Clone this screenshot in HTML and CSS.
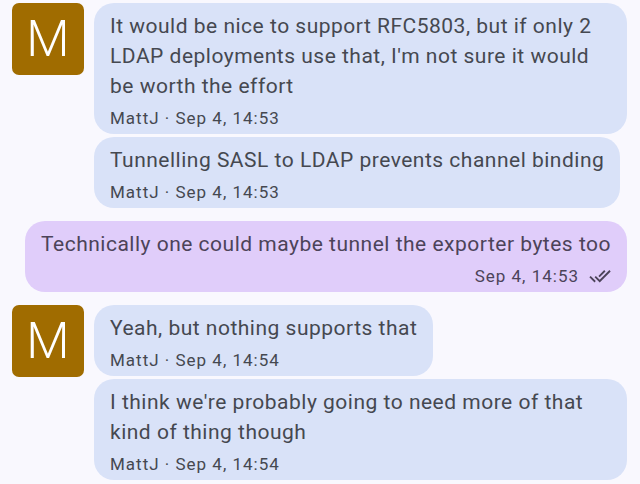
FILE: index.html
```html
<!DOCTYPE html>
<html>
<head>
<meta charset="utf-8">
<link rel="stylesheet" href="styles.css">
</head>
<body>
<div class="chat">
  <div class="group received">
    <div class="avatar">M</div>
    <div class="bubbles">
      <div class="bubble">
        <div class="text">It would be nice to support RFC5803, but if only 2 LDAP deployments use that, I'm not sure it would be worth the effort</div>
        <div class="meta">MattJ · Sep 4, 14:53</div>
      </div>
      <div class="bubble">
        <div class="text">Tunnelling SASL to LDAP prevents channel binding</div>
        <div class="meta">MattJ · Sep 4, 14:53</div>
      </div>
    </div>
  </div>
  <div class="group sent">
    <div class="bubbles">
      <div class="bubble out">
        <div class="text">Technically one could maybe tunnel the exporter bytes too</div>
        <div class="meta out-meta">Sep 4, 14:53
          <svg class="tick" viewBox="0 0 24 24" width="22" height="22"><path fill="currentColor" d="M18 7l-1.41-1.41-6.34 6.34 1.41 1.41L18 7zm4.24-1.41L11.66 16.17 7.48 12l-1.41 1.41L11.66 19l12-12-1.42-1.41zM.41 13.41L6 19l1.41-1.41L1.83 12 .41 13.41z"/></svg>
        </div>
      </div>
    </div>
  </div>
  <div class="group received">
    <div class="avatar">M</div>
    <div class="bubbles">
      <div class="bubble">
        <div class="text">Yeah, but nothing supports that</div>
        <div class="meta">MattJ · Sep 4, 14:54</div>
      </div>
      <div class="bubble">
        <div class="text">I think we're probably going to need more of that kind of thing though</div>
        <div class="meta">MattJ · Sep 4, 14:54</div>
      </div>
    </div>
  </div>
</div>
</body>
</html>
```

FILE: styles.css
```css
html, body {
  margin: 0;
  padding: 0;
  background: #f9f8fe;
}

body {
  font-family: Roboto, "Noto Sans", sans-serif;
  width: 640px;
  height: 484px;
  overflow: hidden;
}

.chat {
  display: flex;
  flex-direction: column;
  gap: 13px;
  padding: 3px 13px 3px 12px;
}

.group {
  display: flex;
  gap: 10px;
}

.group.sent {
  justify-content: flex-end;
}

.avatar {
  flex: 0 0 72px;
  width: 72px;
  height: 72px;
  border-radius: 7px;
  background: #a06c00;
  color: #ffffff;
  font-weight: 300;
  font-size: 50px;
  line-height: 72px;
  text-align: center;
}

.bubbles {
  display: flex;
  flex-direction: column;
  align-items: flex-start;
  gap: 3px;
  min-width: 0;
  flex: 1 1 auto;
}

.sent .bubbles {
  align-items: flex-end;
  flex: 0 1 auto;
}

.bubble {
  background: #d9e2f8;
  color: #454850;
  border-radius: 20px;
  padding: 8px 16px 4px 16px;
  max-width: 100%;
  box-sizing: border-box;
}

.bubble.out {
  background: #e0cdfa;
  color: #4c4359;
}

.text {
  font-size: 21px;
  line-height: 30px;
  letter-spacing: 0.5px;
}

.meta {
  font-size: 17px;
  line-height: 24px;
  margin-top: 5px;
  letter-spacing: 1px;
}

.out-meta {
  display: flex;
  justify-content: flex-end;
  align-items: center;
  gap: 10px;
}

.tick {
  display: block;
}
```
